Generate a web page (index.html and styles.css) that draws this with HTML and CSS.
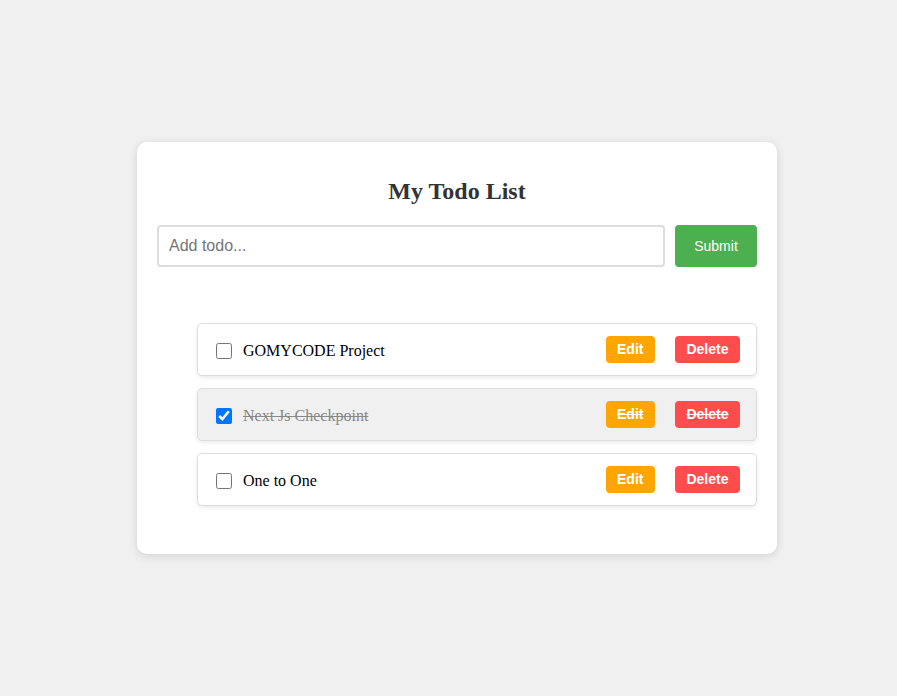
FILE: index.html
```html
<!DOCTYPE html>
<html>
<head>
<meta charset="utf-8">
<link rel="stylesheet" href="styles.css">
</head>
<body>
<div class="card">
  <h2 class="title">My Todo List</h2>
  <form class="add-form">
    <input class="add-input" type="text" placeholder="Add todo...">
    <button class="submit-btn" type="button">Submit</button>
  </form>
  <ul class="todo-list">
    <li class="todo-item">
      <input class="todo-check" type="checkbox">
      <span class="todo-text">GOMYCODE Project</span>
      <button class="btn btn-edit" type="button">Edit</button>
      <button class="btn btn-delete" type="button">Delete</button>
    </li>
    <li class="todo-item done">
      <input class="todo-check" type="checkbox" checked>
      <span class="todo-text">Next Js Checkpoint</span>
      <button class="btn btn-edit" type="button">Edit</button>
      <button class="btn btn-delete" type="button">Delete</button>
    </li>
    <li class="todo-item">
      <input class="todo-check" type="checkbox">
      <span class="todo-text">One to One</span>
      <button class="btn btn-edit" type="button">Edit</button>
      <button class="btn btn-delete" type="button">Delete</button>
    </li>
  </ul>
</div>
</body>
</html>
```

FILE: styles.css
```css
html, body {
  margin: 0;
}
body {
  background: #f0f0f0;
  min-height: 100vh;
  box-sizing: border-box;
  padding-left: 17px;
  display: flex;
  align-items: center;
  justify-content: center;
  font-family: "Liberation Serif", "Times New Roman", serif;
}
.card {
  width: 600px;
  padding: 20px;
  background: #fff;
  border-radius: 10px;
  box-shadow: 0 2px 10px rgba(0, 0, 0, 0.12);
}
.title {
  margin: 16px 0 20px;
  text-align: center;
  font-size: 24px;
  font-weight: bold;
  color: #333;
}
.add-form {
  display: flex;
  gap: 10px;
  margin: 0 0 56px;
}
.add-input {
  flex: 1;
  height: 42px;
  box-sizing: border-box;
  padding: 0 10px;
  border: 2px solid #ddd;
  border-radius: 4px;
  font-family: "Liberation Sans", Arial, sans-serif;
  font-size: 16px;
  color: #333;
  outline: none;
}
.add-input::placeholder {
  color: #757575;
}
.submit-btn {
  width: 82px;
  height: 42px;
  border: none;
  border-radius: 4px;
  background: #4caf50;
  color: #fff;
  font-family: "Liberation Sans", Arial, sans-serif;
  font-size: 14px;
  padding: 0;
}
.todo-list {
  list-style: none;
  margin: 0 0 28px;
  padding: 0 0 0 40px;
}
.todo-item {
  display: flex;
  align-items: center;
  padding: 12px 16px 12px 15px;
  margin-bottom: 12px;
  border: 1px solid #ddd;
  border-radius: 5px;
  background: #fff;
  box-shadow: 0 2px 4px rgba(0, 0, 0, 0.08);
  font-size: 16px;
  color: #000;
}
.todo-item.done {
  background: #f0f0f0;
  color: #888;
  text-decoration: line-through;
}
.todo-check {
  width: 16px;
  height: 16px;
  margin: 2px 3px 0 3px;
}
.todo-text {
  flex: 1;
  margin-left: 8px;
  padding-top: 3px;
}
.btn {
  border: none;
  border-radius: 4px;
  color: #fff;
  font-family: "Liberation Sans", Arial, sans-serif;
  font-size: 14px;
  font-weight: bold;
  padding: 5px 11.5px;
  height: 27px;
  line-height: 17px;
  text-decoration: inherit;
}
.btn-edit {
  background: #ffa500;
  margin-right: 20px;
}
.btn-delete {
  background: #ff4d4d;
}
```
